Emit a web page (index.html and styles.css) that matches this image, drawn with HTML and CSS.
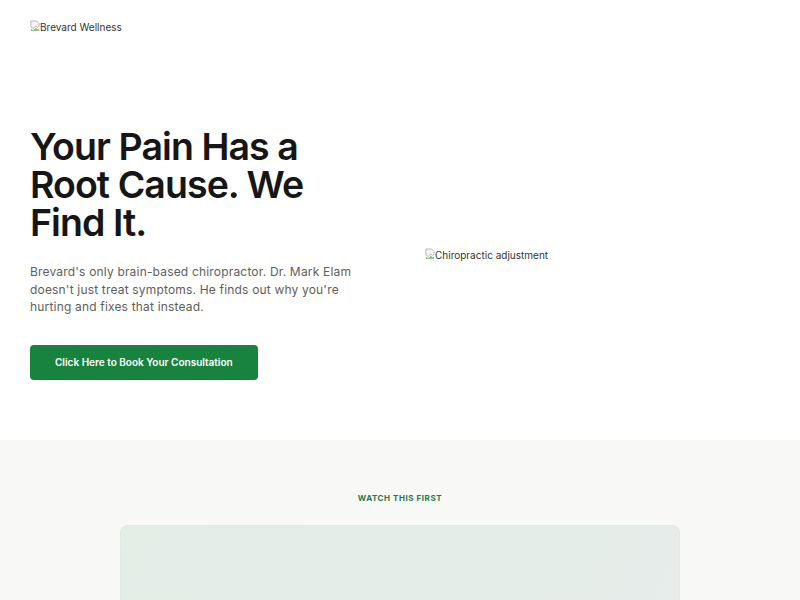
FILE: index.html
```html
<!DOCTYPE html>
<html lang="en">
<head>
  <meta charset="UTF-8" />
  <meta name="viewport" content="width=device-width, initial-scale=1.0"/>
  <title>Brevard Wellness</title>
  <link rel="stylesheet" href="styles.css">
</head>
<body>
  <header class="site-header">
    <span class="img-alt">
      <svg class="broken-icon" viewBox="0 0 12 14" width="10" height="12" aria-hidden="true">
        <path d="M1 1h7l3 3v3L9 9 7 7 4 10 1 8z" fill="#f4f4f4" stroke="#9a9a9a" stroke-width="0.8"/>
        <path d="M1 10l3 2 3-3 2 2 2-1v3H1z" fill="#8fbf8a"/>
      </svg>Brevard Wellness
    </span>
  </header>

  <section class="hero">
    <div class="hero-copy">
      <h1>Your Pain Has a Root Cause. We Find It.</h1>
      <p>Brevard's only brain-based chiropractor. Dr. Mark Elam doesn't just treat symptoms. He finds out why you're hurting and fixes that instead.</p>
      <a href="#book" class="book-btn">Click Here to Book Your Consultation</a>
    </div>
    <div class="hero-media">
      <span class="img-alt">
        <svg class="broken-icon" viewBox="0 0 12 14" width="10" height="12" aria-hidden="true">
          <path d="M1 1h7l3 3v3L9 9 7 7 4 10 1 8z" fill="#f4f4f4" stroke="#9a9a9a" stroke-width="0.8"/>
          <path d="M1 10l3 2 3-3 2 2 2-1v3H1z" fill="#8fbf8a"/>
        </svg>Chiropractic adjustment
      </span>
    </div>
  </section>

  <section class="video-section">
    <h2 class="eyebrow">Watch This First</h2>
    <div class="video-box"></div>
  </section>
</body>
</html>
```

FILE: styles.css
```css
/* Base */
* {
  box-sizing: border-box;
}

body {
  margin: 0;
  font-family: Inter, 'Liberation Sans', sans-serif;
  color: #1a1a1a;
  background: #fff;
}

.img-alt {
  display: inline-flex;
  align-items: flex-end;
  font-size: 10px;
  color: #333;
}

.broken-icon {
  margin-bottom: 1px;
}

/* Header */
.site-header {
  height: 40px;
  padding: 16px 30px 0;
}

/* Hero */
.hero {
  height: 400px;
  display: grid;
  grid-template-columns: 1fr 1fr;
  gap: 50px;
  align-items: center;
  padding: 28px 30px 0;
}

h1 {
  margin: 0 0 21px;
  font-size: 37.5px;
  line-height: 38px;
  font-weight: 600;
  letter-spacing: -0.025em;
  max-width: 300px;
  color: #161616;
}

.hero-copy p {
  margin: 0 0 29px;
  font-size: 12px;
  line-height: 17.5px;
  color: #5e5e5e;
  font-weight: 400;
  letter-spacing: 0.015em;
}

.book-btn {
  display: inline-block;
  padding: 11px 25px;
  background: #17833f;
  color: #fff;
  font-size: 10px;
  font-weight: 600;
  text-decoration: none;
  border-radius: 4px;
  line-height: 13px;
}

.hero-media {
  display: flex;
  align-items: center;
}

/* Video section */
.video-section {
  background: #f8f8f6;
  padding: 53px 120px 0;
  min-height: 200px;
}

.eyebrow {
  margin: 0 0 22px;
  text-align: center;
  font-size: 8px;
  font-weight: 700;
  letter-spacing: 0.07em;
  text-transform: uppercase;
  color: #2a7646;
}

.video-box {
  height: 320px;
  border-radius: 8px;
  border: 1px dotted #dde5e0;
  background: linear-gradient(120deg, #e3eee7, #e6ecea);
}
```
